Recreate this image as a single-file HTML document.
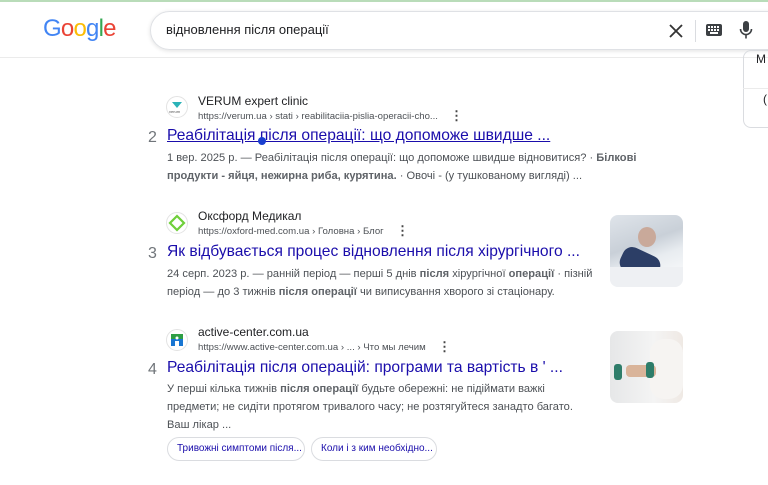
<!DOCTYPE html>
<html><head><meta charset="utf-8"><style>
body{margin:0;width:768px;height:485px;overflow:hidden;background:#fff;font-family:"Liberation Sans",Arial,sans-serif;position:relative}
.a{position:absolute;white-space:nowrap}
.hdr{position:absolute;left:0;top:0;width:768px;height:58px;border-top:2px solid #b9dcb9;border-bottom:1px solid #ebebeb;box-sizing:border-box}
.sb{position:absolute;left:150px;top:11px;width:640px;height:39px;border:1px solid #dfe1e5;border-radius:20px;box-shadow:0 1px 4px rgba(0,0,0,.12);box-sizing:border-box}
.fav{position:absolute;width:22px;height:22px;border-radius:50%;border:1px solid #e3e3e3;background:#fff;box-sizing:border-box;overflow:hidden}
.site{font-size:12px;color:#202124}
.url{font-size:9.6px;color:#4d5156}
.num{font-size:16px;color:#70757a}
.t{font-size:15.6px;color:#1a0dab}
.s{font-size:11.1px;color:#4d5156;line-height:18px}
.s b{color:#5f6368}
.dots{font-size:13px;color:#444;font-weight:bold}
.chip{position:absolute;height:24px;border:1px solid #dadce0;border-radius:12px;font-size:10px;color:#1a0dab;line-height:22px;padding:0 9px;box-sizing:border-box;white-space:nowrap;overflow:hidden}
</style></head><body>
<div class="hdr"></div>
<div class="a" style="left:43px;top:15px;font-size:24px;letter-spacing:-0.8px"><span style="color:#4285f4">G</span><span style="color:#ea4335">o</span><span style="color:#fbbc05">o</span><span style="color:#4285f4">g</span><span style="color:#34a853">l</span><span style="color:#ea4335">e</span></div>
<div class="sb"></div>
<div class="a" style="left:166px;top:22px;font-size:13px;color:#202124">відновлення після операції</div>
<svg class="a" style="left:669px;top:24px" width="14" height="14"><path d="M1 1L13 13M13 1L1 13" stroke="#333" stroke-width="1.8"/></svg>
<div class="a" style="left:695px;top:20px;width:1px;height:22px;background:#dadce0"></div>
<svg class="a" style="left:706px;top:24px" width="16" height="12"><rect x="0" y="0" width="16" height="12" rx="2" fill="#3c4043"/><g fill="#fff"><rect x="2" y="2" width="2" height="2"/><rect x="5" y="2" width="2" height="2"/><rect x="8" y="2" width="2" height="2"/><rect x="11" y="2" width="2" height="2"/><rect x="2" y="5" width="2" height="2"/><rect x="5" y="5" width="2" height="2"/><rect x="8" y="5" width="2" height="2"/><rect x="11" y="5" width="2" height="2"/><rect x="4" y="8" width="8" height="2"/></g></svg>
<svg class="a" style="left:739px;top:21px" width="14" height="18"><rect x="4" y="0" width="6" height="11" rx="3" fill="#3c4043"/><path d="M1.5 8a5.5 5.5 0 0 0 11 0M7 13.5v4" stroke="#3c4043" stroke-width="1.6" fill="none"/></svg>
<div class="a" style="left:743px;top:50px;width:40px;height:78px;border:1px solid #dadce0;border-radius:8px;box-sizing:border-box"></div>
<div class="a" style="left:743px;top:88px;width:30px;height:1px;background:#ebebeb"></div>
<div class="a" style="left:756px;top:52px;font-size:12px;color:#202124">M</div>
<div class="a" style="left:763px;top:92px;font-size:12px;color:#202124">(</div>

<!-- result 2 -->
<div class="fav" style="left:166px;top:96px"><svg width="20" height="20"><path d="M5 5h10l-5 6z" fill="#2bb3b8"/><text x="2" y="16" font-size="4" fill="#555">verum</text></svg></div>
<div class="a site" style="left:198px;top:94px">VERUM expert clinic</div>
<div class="a url" style="left:198px;top:111px">https://verum.ua › stati › reabilitaciia-pislia-operacii-cho...</div>
<div class="a dots" style="left:450px;top:108px">⋮</div>
<div class="a num" style="left:148px;top:129px">2</div>
<div class="a t" style="left:167px;top:127px;text-decoration:underline">Реабілітація після операції: що допоможе швидше ...</div>
<div class="a" style="left:258px;top:137px;width:8px;height:8px;border-radius:50%;background:#1a3fd0"></div>
<div class="a s" style="left:167px;top:149px">1 вер. 2025 р. — Реабілітація після операції: що допоможе швидше відновитися? · <b>Білкові</b><br><b>продукти - яйця, нежирна риба, курятина.</b> · Овочі - (у тушкованому вигляді) ...</div>

<!-- result 3 -->
<div class="fav" style="left:166px;top:212px"><svg width="20" height="20"><path d="M10 3L17 10L10 17L3 10Z" fill="none" stroke="#6fcf3a" stroke-width="2.2"/></svg></div>
<div class="a site" style="left:198px;top:209px">Оксфорд Медикал</div>
<div class="a url" style="left:198px;top:226px">https://oxford-med.com.ua › Головна › Блог</div>
<div class="a dots" style="left:396px;top:223px">⋮</div>
<div class="a num" style="left:148px;top:245px">3</div>
<div class="a t" style="left:167px;top:243px">Як відбувається процес відновлення після хірургічного ...</div>
<div class="a s" style="left:167px;top:265px">24 серп. 2023 р. — ранній період — перші 5 днів <b>після</b> хірургічної <b>операції</b> · пізній<br>період — до 3 тижнів <b>після операції</b> чи виписування хворого зі стаціонару.</div>
<div class="a" style="left:610px;top:215px;width:73px;height:72px;border-radius:8px;overflow:hidden;background:linear-gradient(160deg,#dfe4ea 0%,#c9d0d8 40%,#e8ecf0 60%,#fff 100%)">
<div class="a" style="left:28px;top:12px;width:18px;height:20px;border-radius:50%;background:#c9a99a"></div>
<div class="a" style="left:10px;top:36px;width:40px;height:26px;border-radius:10px;background:#2c3e66;transform:rotate(25deg)"></div>
<div class="a" style="left:0;top:52px;width:73px;height:20px;background:#eef0f3"></div></div>

<!-- result 4 -->
<div class="fav" style="left:166px;top:329px"><svg width="20" height="20"><rect x="4" y="4" width="12" height="12" fill="#1976d2"/><rect x="4" y="4" width="12" height="5" fill="#2e9e44"/><rect x="8" y="11" width="4" height="5" fill="#fff"/><circle cx="10" cy="8" r="1.5" fill="#fff"/></svg></div>
<div class="a site" style="left:198px;top:325px">active-center.com.ua</div>
<div class="a url" style="left:198px;top:342px">https://www.active-center.com.ua › ... › Что мы лечим</div>
<div class="a dots" style="left:438px;top:339px">⋮</div>
<div class="a num" style="left:148px;top:361px">4</div>
<div class="a t" style="left:167px;top:359px">Реабілітація після операцій: програми та вартість в ' ...</div>
<div class="a s" style="left:167px;top:380px">У перші кілька тижнів <b>після операції</b> будьте обережні: не підіймати важкі<br>предмети; не сидіти протягом тривалого часу; не розтягуйтеся занадто багато.<br>Ваш лікар ...</div>
<div class="a" style="left:610px;top:331px;width:73px;height:72px;border-radius:8px;overflow:hidden;background:linear-gradient(90deg,#e6e7e8,#f4f4f4 60%,#efe9e4)">
<div class="a" style="left:40px;top:8px;width:33px;height:60px;border-radius:14px;background:#f6f4f2"></div>
<div class="a" style="left:16px;top:34px;width:30px;height:12px;border-radius:4px;background:#d9b49a"></div>
<div class="a" style="left:4px;top:33px;width:8px;height:16px;border-radius:3px;background:#2e7d6a"></div>
<div class="a" style="left:36px;top:31px;width:8px;height:16px;border-radius:3px;background:#2e7d6a"></div></div>
<div class="chip" style="left:167px;top:437px;width:138px">Тривожні симптоми після...</div>
<div class="chip" style="left:311px;top:437px;width:126px">Коли і з ким необхідно...</div>
</body></html>
